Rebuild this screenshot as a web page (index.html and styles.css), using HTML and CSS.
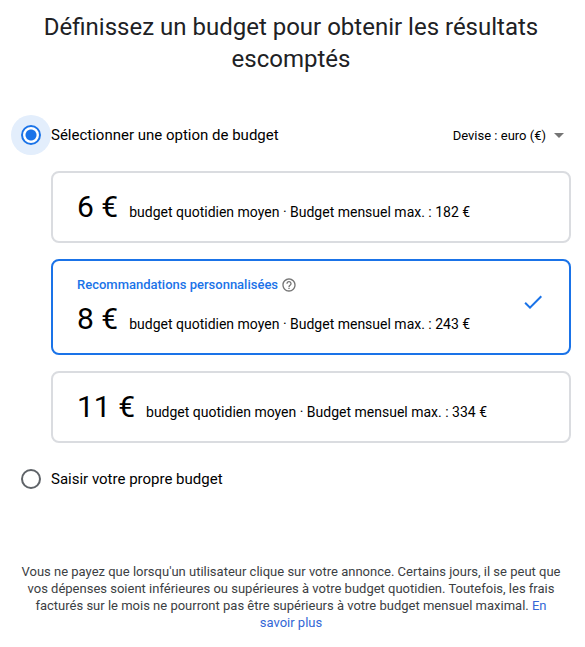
FILE: index.html
```html
<!DOCTYPE html>
<html lang="fr">
<head>
<meta charset="utf-8">
<meta name="viewport" content="width=device-width, initial-scale=1">
<title>Budget</title>
<link rel="stylesheet" href="styles.css">
</head>
<body>
<main class="page">
  <h1 class="title">Définissez un budget pour obtenir les résultats escomptés</h1>
  <form class="form">
    <div class="row">
      <label class="choice"><input class="radio" type="radio" name="mode" checked><span>Sélectionner une option de budget</span></label>
      <button class="currency" type="button">Devise : euro (€)<span class="caret"></span></button>
    </div>
    <div class="options">
      <button class="card" type="button">
        <span class="line"><span class="amount">6 €</span><span class="detail">budget quotidien moyen · Budget mensuel max. : 182 €</span></span>
      </button>
      <button class="card selected" type="button">
        <span class="body">
          <span class="tag">Recommandations personnalisées
            <svg class="help" viewBox="0 0 24 24" aria-hidden="true"><path d="M11 18h2v-2h-2v2zm1-16C6.48 2 2 6.48 2 12s4.48 10 10 10 10-4.480 10-10S17.520 2 12 2zm0 18c-4.410 0-8-3.590-8-8s3.590-8 8-8 8 3.590 8 8-3.590 8-8 8zm0-14c-2.210 0-4 1.790-4 4h2c0-1.100.9-2 2-2s2 .9 2 2c0 2-3 1.750-3 5h2c0-2.250 3-2.500 3-5 0-2.210-1.790-4-4-4z"/></svg>
          </span>
          <span class="line"><span class="amount">8 €</span><span class="detail">budget quotidien moyen · Budget mensuel max. : 243 €</span></span>
        </span>
        <svg class="check" viewBox="0 0 24 24" aria-hidden="true"><path d="M9 16.170L4.830 12l-1.420 1.410L9 19 21 7l-1.410-1.410z"/></svg>
      </button>
      <button class="card" type="button">
        <span class="line"><span class="amount">11 €</span><span class="detail">budget quotidien moyen · Budget mensuel max. : 334 €</span></span>
      </button>
    </div>
    <div class="row">
      <label class="choice"><input class="radio" type="radio" name="mode"><span>Saisir votre propre budget</span></label>
    </div>
  </form>
  <p class="note">Vous ne payez que lorsqu'un utilisateur clique sur votre annonce. Certains jours, il se peut que vos dépenses soient inférieures ou supérieures à votre budget quotidien. Toutefois, les frais facturés sur le mois ne pourront pas être supérieurs à votre budget mensuel maximal. <a href="#">En savoir plus</a></p>
</main>
</body>
</html>
```
FILE: styles.css
```css
* { box-sizing: border-box; }
body {
  margin: 0;
  background: #fff;
  color: #000;
  font-family: Roboto, sans-serif;
}
.page { padding: 11px 14px 16px 11px; }
.title {
  margin: 0 0 40px;
  font-family: "Google Sans", Roboto, sans-serif;
  font-size: 24px;
  line-height: 32px;
  font-weight: 400;
  color: #202124;
  text-align: center;
}
.row {
  display: flex;
  align-items: center;
  justify-content: space-between;
  height: 40px;
}
.choice { display: flex; align-items: center; font-size: 15px; }
.radio {
  appearance: none;
  flex: none;
  width: 20px;
  height: 20px;
  margin: 0 10px;
  border: 2px solid #5f6368;
  border-radius: 50%;
}
.radio:checked {
  border-color: #1a73e8;
  background: radial-gradient(circle, #1a73e8 5px, #fff 6px);
  box-shadow: 0 0 0 10px #e3eefc;
}
.currency {
  display: flex;
  align-items: center;
  gap: 8px;
  padding: 0 7px 0 0;
  border: 0;
  background: none;
  font: 13px Roboto, sans-serif;
  color: #000;
}
.caret {
  border: 5px solid transparent;
  border-top-color: #757575;
  border-bottom: 0;
}
.options {
  display: grid;
  gap: 16px;
  margin: 16px 0 16px 40px;
}
.card {
  display: flex;
  align-items: center;
  justify-content: space-between;
  min-height: 72px;
  padding: 14px 24px;
  border: 2px solid #dadce0;
  border-radius: 8px;
  background: #fff;
  font: 14px Roboto, sans-serif;
  color: #000;
  text-align: left;
}
.selected { border-color: #1a73e8; }
.body { display: grid; gap: 4px; }
.line { display: flex; align-items: baseline; gap: 11px; }
.amount { font-size: 30px; line-height: 40px; }
.tag {
  display: flex;
  align-items: center;
  gap: 3px;
  font-size: 13px;
  line-height: 20px;
  font-weight: 500;
  color: #1a73e8;
}
.help { width: 16px; height: 16px; fill: #757575; }
.check { width: 24px; height: 24px; margin-bottom: 10px; fill: #1a73e8; }
.note {
  margin: 64px 8px 0;
  font-size: 13px;
  line-height: 17px;
  color: #3c4043;
  text-align: center;
}
.note a { color: #3367d6; text-decoration: none; }
```
